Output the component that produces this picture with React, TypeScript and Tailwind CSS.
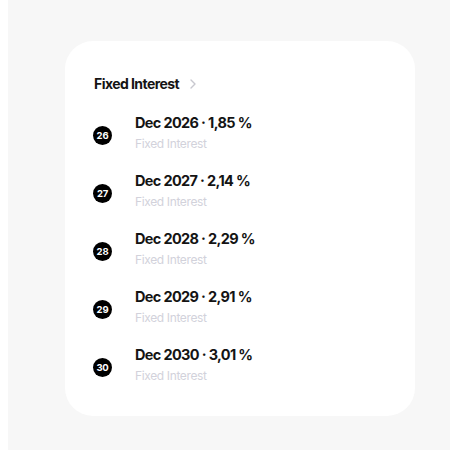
import React from 'react';

interface Rate {
    day: string;
    label: string;
}

const rates: Rate[] = [
    { day: '26', label: 'Dec 2026 · 1,85 %' },
    { day: '27', label: 'Dec 2027 · 2,14 %' },
    { day: '28', label: 'Dec 2028 · 2,29 %' },
    { day: '29', label: 'Dec 2029 · 2,91 %' },
    { day: '30', label: 'Dec 2030 · 3,01 %' },
];

const RateRow: React.FC<{ rate: Rate }> = ({ rate }) => (
    <li className="flex items-start">
        <span className="ml-[-1px] mt-[13px] flex h-[19px] w-[19px] flex-shrink-0 items-center justify-center rounded-full bg-black text-[9.5px] font-bold leading-none tracking-[-0.02em] text-white">
            {rate.day}
        </span>
        <div className="ml-[23px] flex flex-col">
            <span className="text-[14.5px] font-bold leading-[20px] tracking-[-0.045em] text-[#141414]">{rate.label}</span>
            <span className="mt-[3px] text-[12px] leading-[16px] tracking-[-0.03em] text-[#d2d2db]">Fixed Interest</span>
        </div>
    </li>
);

export default function App() {
    return (
        <div className="h-[450px] w-[450px] bg-white pl-2" style={{ fontFamily: 'Inter, "Noto Sans", sans-serif' }}>
            <div className="h-full w-full bg-[#f7f7f7] pl-[57px] pt-[41px]">
                <section className="h-[375px] w-[350px] rounded-[28px] bg-white px-[29px] pt-[35px]">
                    <header className="flex items-center h-[16px]">
                        <h2 className="text-[14px] font-bold leading-[16px] tracking-[-0.04em] text-[#141414]">Fixed Interest</h2>
                        <svg className="ml-[11px]" width="6" height="10" viewBox="0 0 6 10" fill="none">
                            <path d="M1 1l4 4-4 4" stroke="#c8c8cf" strokeWidth="1.4" strokeLinecap="round" strokeLinejoin="round" />
                        </svg>
                    </header>
                    <ul className="mt-[21px] flex flex-col gap-[19px]">
                        {rates.map((rate) => (
                            <RateRow key={rate.day} rate={rate} />
                        ))}
                    </ul>
                </section>
            </div>
        </div>
    );
}
